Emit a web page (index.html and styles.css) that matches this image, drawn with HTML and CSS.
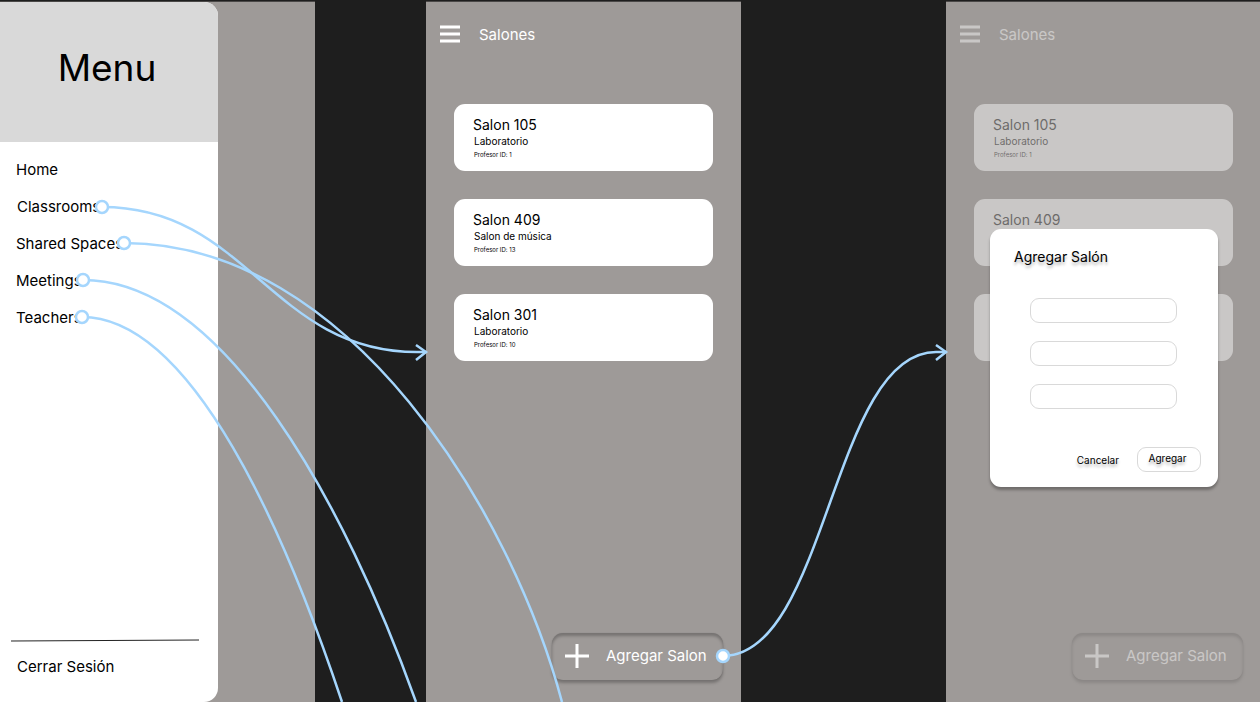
FILE: index.html
```html
<!DOCTYPE html>
<html lang="es">
<head>
<meta charset="utf-8">
<meta name="viewport" content="width=device-width, initial-scale=1">
<title>Salones</title>
<link rel="stylesheet" href="styles.css">
</head>
<body>
<main class="canvas">
  <section class="frame frame-menu">
    <div class="drawer">
      <header class="drawer-head"><h1>Menu</h1></header>
      <nav class="drawer-nav">
        <a href="#home">Home</a>
        <a href="#classrooms" class="inset">Classrooms</a>
        <a href="#spaces">Shared Spaces</a>
        <a href="#meetings">Meetings</a>
        <a href="#teachers">Teachers</a>
      </nav>
      <footer class="drawer-foot">
        <svg class="rule" viewBox="0 0 188 3" preserveAspectRatio="none" aria-hidden="true"><path d="M0 2L188 1"/></svg>
        <a href="#logout">Cerrar Sesión</a>
      </footer>
    </div>
  </section>

  <section class="frame frame-list">
    <div class="screen">
      <header class="topbar">
        <button class="burger" aria-label="Menu"><svg viewBox="0 0 20 18"><path d="M0 2h20M0 9h20M0 16h20"/></svg></button>
        <h2>Salones</h2>
      </header>
      <div class="cards">
        <article class="card"><h3>Salon 105</h3><p class="kind">Laboratorio</p><p class="prof">Profesor ID: 1</p></article>
        <article class="card"><h3>Salon 409</h3><p class="kind">Salon de música</p><p class="prof">Profesor ID: 13</p></article>
        <article class="card"><h3>Salon 301</h3><p class="kind">Laboratorio</p><p class="prof">Profesor ID: 10</p></article>
      </div>
      <button class="add"><svg viewBox="0 0 24 24" aria-hidden="true"><path d="M0 12h24M12 0v24"/></svg><span>Agregar Salon</span></button>
    </div>
  </section>

  <section class="frame frame-dialog">
    <div class="screen dimmed">
      <header class="topbar">
        <button class="burger" aria-label="Menu"><svg viewBox="0 0 20 18"><path d="M0 2h20M0 9h20M0 16h20"/></svg></button>
        <h2>Salones</h2>
      </header>
      <div class="cards">
        <article class="card"><h3>Salon 105</h3><p class="kind">Laboratorio</p><p class="prof">Profesor ID: 1</p></article>
        <article class="card"><h3>Salon 409</h3></article>
        <article class="card"></article>
      </div>
      <button class="add"><svg viewBox="0 0 24 24" aria-hidden="true"><path d="M0 12h24M12 0v24"/></svg><span>Agregar Salon</span></button>
    </div>
    <form class="modal" role="dialog" aria-labelledby="modal-title">
      <h2 id="modal-title">Agregar Salón</h2>
      <div class="fields">
        <input type="text" aria-label="Salón">
        <input type="text" aria-label="Tipo">
        <input type="text" aria-label="Profesor ID">
      </div>
      <div class="actions">
        <button type="button" class="cancel">Cancelar</button>
        <button type="button" class="confirm">Agregar</button>
      </div>
    </form>
  </section>

  <svg class="links" viewBox="0 0 1260 702" preserveAspectRatio="none" aria-hidden="true">
    <path d="M102 207C248 207 271 352 417 352H426"/>
    <path d="M124 243C350 243 512 514 562 702"/>
    <path d="M83 280C224 280 346 506 416 702"/>
    <path d="M82 317C193 317 287 537 342 702"/>
    <path d="M723 656C827 656 832 352 936 352H946"/>
    <path d="M416 345L426 352L416 360M936 345L946 352L936 360"/>
    <circle cx="102" cy="207" r="6"/>
    <circle cx="124" cy="243" r="6"/>
    <circle cx="83" cy="280" r="6"/>
    <circle cx="82" cy="317" r="6"/>
    <circle cx="723" cy="656" r="6"/>
  </svg>
</main>
</body>
</html>
```
FILE: styles.css
```css
* { box-sizing: border-box; }

body {
  margin: 0;
  background: #1e1e1e;
  color: #000;
  font-family: Inter, "Liberation Sans", sans-serif;
  overflow: hidden;
}

h1, h2, h3, p { margin: 0; font-weight: 400; }
a { color: inherit; text-decoration: none; }
button { padding: 0; border: 0; background: none; color: inherit; font: inherit; }
svg { display: block; fill: none; }

.canvas {
  position: relative;
  display: grid;
  grid-template-columns: 315fr 111fr 315fr 205fr 314fr;
  min-height: 100vh;
  padding-top: 1px;
}

.frame {
  position: relative;
  display: flex;
  background: #9e9a98;
  border-top: 1px solid #4a4847;
}
.frame-menu { grid-column: 1; }
.frame-list { grid-column: 3; }
.frame-dialog { grid-column: 5; }

/* Menu drawer */
.drawer {
  display: flex;
  flex-direction: column;
  width: 218px;
  background: #fff;
  border-radius: 0 14px 14px 0;
  overflow: hidden;
}
.drawer-head {
  height: 140px;
  padding: 43px 4px 0 0;
  background: #d9d9d9;
  text-align: center;
}
.drawer-head h1 { font-size: 37px; line-height: 46px; }
.drawer-nav {
  display: flex;
  flex-direction: column;
  gap: 17px;
  padding: 18px 16px;
  font-size: 15px;
  line-height: 20px;
}
.inset { padding-left: 1px; }
.drawer-foot {
  margin-top: auto;
  padding: 0 19px 25px 11px;
  font-size: 15px;
  line-height: 20px;
}
.drawer-foot a { display: block; padding: 15px 6px 0; }
.rule { width: 100%; height: 3px; stroke: #222; stroke-width: 1; }

/* Classroom list */
.screen {
  flex: 1;
  display: flex;
  flex-direction: column;
  padding: 23px 18px 22px 14px;
}
.topbar {
  display: flex;
  align-items: flex-start;
  gap: 19px;
  color: #fff;
}
.topbar h2 { font-size: 15px; line-height: 20px; }
.burger svg { width: 20px; height: 18px; stroke: #fff; stroke-width: 3; }
.cards {
  display: flex;
  flex-direction: column;
  gap: 28px;
  padding: 59px 10px 0 14px;
}
.card {
  height: 67px;
  padding: 12px 19px;
  background: #fff;
  border-radius: 11px;
}
.card h3 { font-size: 14px; line-height: 18px; }
.kind { padding-left: 1px; font-size: 10px; line-height: 14px; }
.prof { padding-left: 1px; font-size: 6px; line-height: 14px; }
.add {
  display: flex;
  align-items: center;
  align-self: flex-end;
  gap: 17px;
  width: 171px;
  height: 47px;
  margin-top: auto;
  padding: 0 0 2px 13px;
  border-radius: 11px;
  box-shadow: 0 3px 3px rgba(0, 0, 0, .25), inset 0 3px 3px rgba(0, 0, 0, .25), 0 0 1px rgba(0, 0, 0, .2);
  color: #fff;
  font-size: 15px;
}
.add svg { width: 24px; height: 24px; stroke: #fff; stroke-width: 3; }

.dimmed { padding-right: 17px; opacity: .45; }
.dimmed .card { color: #333; }

/* Dialog */
.modal {
  position: absolute;
  top: 227px;
  left: 44px;
  right: 42px;
  padding: 18px 17px 15px 24px;
  background: #fff;
  border-radius: 11px;
  box-shadow: 0 3px 3px rgba(0, 0, 0, .3);
  text-shadow: 0 3px 3px rgba(0, 0, 0, .3);
}
.modal h2 { font-size: 14px; line-height: 20px; }
.fields {
  display: flex;
  flex-direction: column;
  gap: 18px;
  padding: 31px 24px 38px 16px;
}
.fields input {
  width: 100%;
  height: 25px;
  padding: 0 8px;
  border: 1px solid #d9d9d9;
  border-radius: 9px;
  background: #fff;
  font: inherit;
  font-size: 10px;
}
.actions {
  display: flex;
  justify-content: flex-end;
  gap: 18px;
  font-size: 10px;
}
.cancel, .confirm { text-shadow: inherit; }
.confirm {
  width: 64px;
  height: 25px;
  padding: 0 3px 4px 0;
  border: 1px solid #d9d9d9;
  border-radius: 9px;
}

/* Prototype connectors */
.links {
  position: absolute;
  inset: 0;
  width: 100%;
  height: 100%;
  stroke: #a5d6fd;
  stroke-width: 2.5;
  pointer-events: none;
}
.links circle { fill: #fff; }
```
